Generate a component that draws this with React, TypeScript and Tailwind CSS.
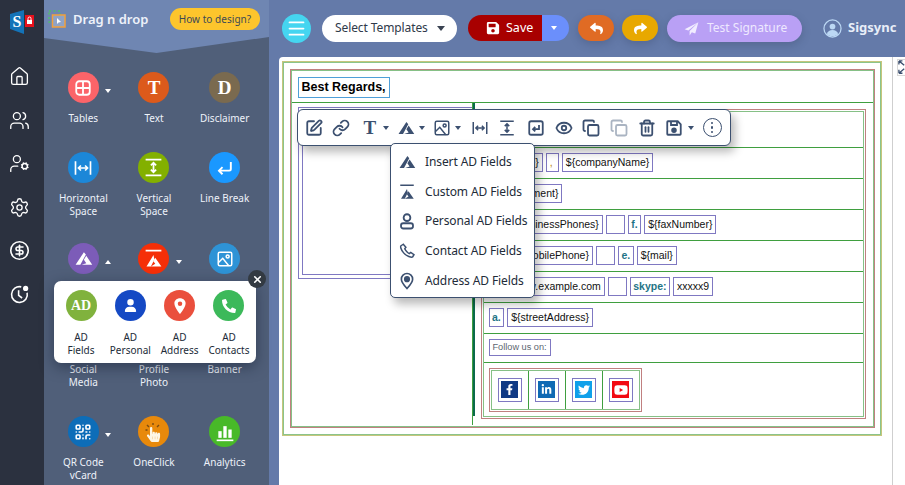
import type { ReactNode } from "react";
import {
  CircleDollarSign,
  Copy,
  Eye,
  Home,
  Link,
  Menu,
  QrCode,
  Settings,
  SquarePen,
  Trash2,
  UserCog,
  Users,
  X,
} from "lucide-react";
import {
  FaFacebookF,
  FaHandPointer,
  FaLinkedinIn,
  FaPhoneAlt,
  FaReply,
  FaSave,
  FaShare,
  FaTwitter,
  FaYoutube,
} from "react-icons/fa";
import { IoLocationSharp } from "react-icons/io5";
import { FaUser } from "react-icons/fa6";

const ui = "font-['Noto_Sans',sans-serif]";

function AdGlyph({ className = "", bar = false }: { className?: string; bar?: boolean }) {
  return (
    <svg viewBox="0 0 24 24" className={className} fill="currentColor">
      {bar ? (
        <>
          <rect x="3" y="2" width="18" height="2" />
          <path d="M12 8 4 21h5l4-8zM14 11l7 10H9l5-3-2.2-3z" />
        </>
      ) : (
        <path d="M12.5 4 2 20h6l7-13zM15.5 8.5 23 20H9.5l6-2-3-4.5z" />
      )}
    </svg>
  );
}

function HSpace({ className = "" }: { className?: string }) {
  return (
    <svg viewBox="0 0 24 24" className={className} fill="none" stroke="currentColor" strokeWidth="2">
      <path d="M3 4v16M21 4v16M6.5 12h11M9.5 9l-3 3 3 3M14.5 9l3 3-3 3" />
    </svg>
  );
}

function VSpace({ className = "" }: { className?: string }) {
  return (
    <svg viewBox="0 0 24 24" className={className} fill="none" stroke="currentColor" strokeWidth="2">
      <path d="M3 3h18M3 21h18M12 6.5v11M9 9.5l3-3 3 3M9 14.5l3 3 3-3" />
    </svg>
  );
}

function TableGlyph() {
  return (
    <svg viewBox="0 0 24 24" className="h-[18px] w-[18px]" fill="none" stroke="white" strokeWidth="2.4">
      <rect x="3" y="3" width="18" height="18" rx="4" />
      <path d="M12 3v18M3 12h18" />
    </svg>
  );
}

function ImageGlyph({ className = "" }: { className?: string }) {
  return (
    <svg viewBox="0 0 24 24" className={className} fill="none" stroke="currentColor" strokeWidth="2">
      <rect x="3" y="3" width="18" height="18" rx="2" />
      <circle cx="15.5" cy="8.5" r="2" />
      <path d="m3 17 6-6 8 10" />
    </svg>
  );
}

function BreakGlyph() {
  return (
    <svg viewBox="0 0 24 24" className="h-[19px] w-[19px]" fill="none" stroke="white" strokeWidth="2.4">
      <path d="M20 5v9a2 2 0 0 1-2 2H5M9.5 11.5 5 16l4.5 4.5" />
    </svg>
  );
}

function AnalyticsGlyph() {
  return (
    <svg viewBox="0 0 24 24" className="h-[20px] w-[20px]" fill="white">
      <rect x="4" y="11" width="4" height="8" />
      <rect x="10" y="5" width="4" height="14" />
      <rect x="16" y="9" width="4" height="10" />
      <rect x="2" y="21" width="20" height="2" />
    </svg>
  );
}

function ClickGlyph() {
  return (
    <span className="relative flex h-[20px] w-[20px] items-end justify-center">
      <FaHandPointer className="h-[15px] w-[15px] text-[#fdf6e6]" />
      <svg viewBox="0 0 20 20" className="absolute inset-0" fill="none" stroke="#7a4a12" strokeWidth="1.4">
        <path d="M5 5 3 3M9 3V1M13 5l2-2M3.500 8H1.500" />
      </svg>
    </span>
  );
}

function Caret({ up = false, className = "" }: { up?: boolean; className?: string }) {
  return (
    <span
      className={`h-0 w-0 border-x-[3.5px] border-x-transparent ${
        up ? "border-b-[4px] border-b-white" : "border-t-[4px] border-t-white"
      } ${className}`}
    />
  );
}

type PanelItem = { label: string[]; bg: string; icon: ReactNode; caret?: "up" | "down" };

const serif = "font-['Liberation_Serif',serif] text-[19px] font-bold leading-none text-white";

const panelItems: PanelItem[] = [
  { label: ["Tables"], bg: "bg-[#fb6469]", icon: <TableGlyph />, caret: "down" },
  { label: ["Text"], bg: "bg-[#dc5a1b]", icon: <span className={serif}>T</span> },
  { label: ["Disclaimer"], bg: "bg-[#7a6a4f]", icon: <span className={serif}>D</span> },
  { label: ["Horizontal", "Space"], bg: "bg-[#1c87d8]", icon: <HSpace className="h-[20px] w-[20px] text-white" /> },
  { label: ["Vertical", "Space"], bg: "bg-[#83b000]", icon: <VSpace className="h-[21px] w-[21px] text-white" /> },
  { label: ["Line Break"], bg: "bg-[#1a98ff]", icon: <BreakGlyph /> },
  { label: ["AD Fields"], bg: "bg-[#7c5cb8]", icon: <AdGlyph className="h-[19px] w-[19px] text-white" />, caret: "up" },
  { label: ["Custom AD"], bg: "bg-[#f52f08]", icon: <AdGlyph bar className="h-[21px] w-[21px] text-white" />, caret: "down" },
  { label: ["Image"], bg: "bg-[#2e93d6]", icon: <ImageGlyph className="h-[18px] w-[18px] text-white" /> },
  { label: ["Social", "Media"], bg: "bg-[#3a86c8]", icon: null },
  { label: ["Profile", "Photo"], bg: "bg-[#3a86c8]", icon: null },
  { label: ["Banner"], bg: "bg-[#3a86c8]", icon: null },
  { label: ["QR Code", "vCard"], bg: "bg-[#0d6db8]", icon: <QrCode className="h-[18px] w-[18px] text-white" strokeWidth={2.2} />, caret: "down" },
  { label: ["OneClick"], bg: "bg-[#e8890b]", icon: <ClickGlyph /> },
  { label: ["Analytics"], bg: "bg-[#48b928]", icon: <AnalyticsGlyph /> },
];

const popItems = [
  { label: ["AD", "Fields"], bg: "bg-[#80b23d]", icon: <span className="font-['Liberation_Serif',serif] text-[14px] font-bold text-white">AD</span> },
  { label: ["AD", "Personal"], bg: "bg-[#1549c4]", icon: <FaUser className="h-[13px] w-[13px] text-white" /> },
  { label: ["AD", "Address"], bg: "bg-[#ea4f3d]", icon: <IoLocationSharp className="h-[18px] w-[18px] text-white" /> },
  { label: ["AD", "Contacts"], bg: "bg-[#3cb95a]", icon: <FaPhoneAlt className="h-[14px] w-[14px] text-white" /> },
];

function Sidebar() {
  return (
    <aside className="flex h-full w-[44px] shrink-0 flex-col items-center bg-[#2b313f] pr-[5px] text-white">
      <svg viewBox="0 0 25 24" className="ml-[5px] mt-[10px] h-[24px] w-[25px] shrink-0">
        <polygon points="0,4 14,0 14,24 0,19" fill="#1473b8" />
        <text x="2.5" y="17" fontFamily="Liberation Serif" fontWeight="700" fontSize="16" fill="white">S</text>
        <rect x="15" y="5" width="9" height="12" fill="#e8101c" />
        <rect x="17" y="10" width="5" height="4" fill="white" />
        <path d="M18 10V8.5a1.500 1.500 0 0 1 3 0V10" fill="none" stroke="white" />
      </svg>
      <div className="mt-[32px] flex flex-col items-center gap-[22.5px]">
        <Home className="h-[21px] w-[21px]" strokeWidth={1.5} />
        <Users className="h-[21px] w-[21px]" strokeWidth={1.5} />
        <UserCog className="h-[21px] w-[21px]" strokeWidth={1.5} />
        <Settings className="h-[21px] w-[21px]" strokeWidth={1.5} />
        <CircleDollarSign className="h-[21px] w-[21px]" strokeWidth={1.8} />
        <svg viewBox="0 0 24 24" className="h-[21px] w-[21px]" fill="none" stroke="white" strokeWidth="1.8">
          <path d="M14 3.300A9 9 0 1 0 20.700 10M11 7v6l4 3" />
          <circle cx="19" cy="5" r="3" fill="white" stroke="none" />
        </svg>
      </div>
    </aside>
  );
}

function Panel() {
  return (
    <section className={`relative h-full w-[225px] shrink-0 bg-[#505f79] text-white ${ui}`}>
      <header className="flex h-[53px] items-start bg-[#6f86b2] pl-[4px] pr-[9px] pt-[8px] [clip-path:polygon(0_0,100%_0,100%_37px,50%_53px,0_38px)]">
        <svg viewBox="0 0 18 18" className="mt-[2px] h-[18px] w-[18px]" fill="none">
          <rect x="1" y="1" width="11" height="11" stroke="#52c06a" strokeWidth="1.5" strokeDasharray="2 2.5" />
          <rect x="4.5" y="5" width="12.5" height="12" fill="#8fa3c7" stroke="#f2a03d" strokeWidth="1.5" />
          <path d="M9 8v6l1.500-1.500 2.500-.5z" fill="white" />
        </svg>
        <span className="ml-[7px] mt-[1px] text-[13px] font-semibold leading-[20px] text-[#eef2fa]">Drag n drop</span>
        <span className="ml-auto flex h-[22px] w-[90px] items-center justify-center rounded-full bg-[#fdc52c] text-[10px] tracking-[0.05px] text-[#3d4a55]">
          How to design?
        </span>
      </header>
      <div className="ml-[4px] mt-[19px] grid w-[212px] grid-cols-3 grid-rows-[80px_91px_80px_93px_80px] text-[#eef2fa]">
        {panelItems.map((item) => (
          <div key={item.label.join(" ")} className="relative flex flex-col items-center">
            <span className={`flex h-[31px] w-[31px] items-center justify-center rounded-full ${item.bg}`}>{item.icon}</span>
            {item.caret ? <Caret up={item.caret === "up"} className="absolute left-[57px] top-[17px]" /> : null}
            <span className="mt-[9px] text-center text-[10px] leading-[13px]">
              {item.label.map((line) => (
                <span key={line} className="block">
                  {line}
                </span>
              ))}
            </span>
          </div>
        ))}
      </div>
      <div className="absolute left-[10px] top-[281px] flex h-[82px] w-[202px] justify-between rounded-[7px] bg-white px-[6px] pt-[9px] shadow-[0_4px_14px_rgba(20,30,50,0.5)]">
        {popItems.map((item) => (
          <div key={item.label[1]} className="flex w-[42px] flex-col items-center">
            <span className={`flex h-[31px] w-[31px] items-center justify-center rounded-full ${item.bg}`}>{item.icon}</span>
            <span className="mt-[10px] whitespace-nowrap text-center text-[10px] leading-[13px] text-[#222b38]">
              {item.label.map((line) => (
                <span key={line} className="block">
                  {line}
                </span>
              ))}
            </span>
          </div>
        ))}
      </div>
      <span className="absolute left-[204px] top-[270px] flex h-[18px] w-[18px] items-center justify-center rounded-full bg-[#333a42]">
        <X className="h-[11px] w-[11px] text-white" strokeWidth={3.5} />
      </span>
    </section>
  );
}

function TopBar() {
  return (
    <div className={`flex h-[57px] shrink-0 items-center bg-[#647aa9] pb-[1px] pl-[13px] ${ui}`}>
      <span className="flex h-[29px] w-[29px] items-center justify-center rounded-full bg-[#45d5f0]">
        <Menu className="h-[21px] w-[21px] text-white" strokeWidth={2} />
      </span>
      <span className="ml-[11px] flex h-[27px] w-[135px] items-center rounded-full bg-white pl-[13px] text-[12px] tracking-[-0.1px] text-[#2f3a4a]">
        Select Templates
        <span className="ml-[9px] h-0 w-0 border-x-[4.5px] border-t-[5px] border-x-transparent border-t-[#3a4352]" />
      </span>
      <span className="ml-[11px] flex h-[26px] w-[74px] items-center rounded-l-full bg-[#a80000] pl-[18px] text-[12.5px] text-white">
        <FaSave className="h-[14px] w-[14px]" />
        <span className="ml-[6px]">Save</span>
      </span>
      <span className="flex h-[26px] w-[27px] items-center justify-center rounded-r-full bg-[#6b8ffb] pr-[4px]">
        <Caret />
      </span>
      <span className="ml-[9px] flex h-[26px] w-[36px] items-center justify-center rounded-full bg-[#e06b24] text-white shadow-[0_3px_8px_rgba(40,50,80,0.25)]">
        <FaReply className="h-[13px] w-[13px]" />
      </span>
      <span className="ml-[8px] flex h-[26px] w-[36px] items-center justify-center rounded-full bg-[#e8a800] text-white shadow-[0_3px_8px_rgba(40,50,80,0.25)]">
        <FaShare className="h-[13px] w-[13px]" />
      </span>
      <span className="ml-[9px] flex h-[27px] w-[135px] items-center rounded-full bg-[#b9a0f5] pl-[17px] text-[12px] text-[#eee8ff] shadow-[0_3px_8px_rgba(40,50,80,0.25)]">
        <svg viewBox="0 0 24 24" className="h-[15px] w-[15px]" fill="#f1ecff">
          <path d="M23 2 1 13l6 2zM23 2 9 16v7l3.500-5 5.500 2z" />
        </svg>
        <span className="ml-[8px]">Test Signature</span>
      </span>
      <svg viewBox="0 0 20 20" className="ml-[21px] h-[19px] w-[19px]" fill="none">
        <circle cx="10" cy="10" r="9" stroke="#bcd8f4" strokeWidth="1.3" />
        <circle cx="10" cy="8" r="3" fill="#bcd8f4" />
        <path d="M4 16c1-3.500 3-4.500 6-4.500s5 1 6 4.500c-3.500 3-8.500 3-12 0z" fill="#bcd8f4" />
      </svg>
      <span className="ml-[6px] text-[13px] font-bold text-[#e8eef8]">Sigsync</span>
    </div>
  );
}

function Box({ children, className = "h-[19px] px-[3px] text-[10.5px] text-[#111]" }: { children?: ReactNode; className?: string }) {
  return <span className={`flex items-center whitespace-nowrap border border-[#7f78c2] ${className}`}>{children}</span>;
}

function Label({ children }: { children: ReactNode }) {
  return <Box className="h-[19px] px-[2.5px] text-[10.5px] font-bold text-[#1f7485]">{children}</Box>;
}

function Row({ children, className = "h-[31px]" }: { children: ReactNode; className?: string }) {
  return <div className={`flex items-center gap-[3px] border-b border-[#3f9f3f] pl-[5px] ${className}`}>{children}</div>;
}

const socials = [
  { bg: "bg-[#103a84]", icon: <FaFacebookF className="h-[11px] w-[11px] text-white" /> },
  { bg: "bg-[#0f69b4]", icon: <FaLinkedinIn className="h-[11px] w-[11px] text-white" /> },
  { bg: "bg-[#10a0ea]", icon: <FaTwitter className="h-[12px] w-[12px] text-white" /> },
  { bg: "bg-[#f20a12]", icon: <FaYoutube className="h-[14px] w-[14px] text-white" /> },
];

function Signature() {
  return (
    <div className="ml-[3px] mt-[4px] h-[375px] w-[600px] border border-[#c6c67c] font-['Liberation_Sans',sans-serif]">
      <div className="h-full border-[1.5px] border-[#8bc48b] p-[5.5px]">
        <div className="h-[359px] border border-[#c08080]">
          <div className="h-full border border-[#86c086]">
            <div className="flex h-[32px] items-center border-b border-[#3f9f3f] pl-[6px] pt-[3px]">
              <span className="flex h-[21px] w-[92px] items-center whitespace-nowrap border border-[#4f9fd8] px-[3px] text-[12.5px] font-bold leading-none text-black">
                Best Regards,
              </span>
            </div>
            <div className="flex h-[322px]">
              <div className="h-full w-[181px] shrink-0 border-r border-[#3f9f3f] pl-[6px] pt-[4px]">
                <div className="h-[172px] border border-r-0 border-[#7f78c2] pb-[3px] pl-[3px] pt-[3px]">
                  <div className="h-full border border-r-0 border-[#7f78c2]" />
                </div>
              </div>
              <div className="h-[313px] w-[2px] shrink-0 bg-[#0b6b4c]" />
              <div className="ml-[6px] mt-[6px] h-[310px] w-[385px] border border-[#c08080] p-[1px]">
                <div className="h-full border border-[#86c086]">
                  <Row className="h-[36px]">
                    <Box>{"${displayName}"}</Box>
                  </Row>
                  <Row>
                    <Box>{"${jobTitle}"}</Box>
                    <Box className="h-[19px] w-[13px] px-[3px] text-[10.5px] text-[#b8860b]">,</Box>
                    <Box>{"${companyName}"}</Box>
                  </Row>
                  <Row>
                    <Box>{"${department}"}</Box>
                  </Row>
                  <Row>
                    <Label>t.</Label>
                    <Box>{"${businessPhones}"}</Box>
                    <Box className="h-[19px] w-[19px]" />
                    <Label>f.</Label>
                    <Box>{"${faxNumber}"}</Box>
                  </Row>
                  <Row>
                    <Label>m.</Label>
                    <Box>{"${mobilePhone}"}</Box>
                    <Box className="h-[19px] w-[19px]" />
                    <Label>e.</Label>
                    <Box>{"${mail}"}</Box>
                  </Row>
                  <Row>
                    <Label>w.</Label>
                    <Box>www.example.com</Box>
                    <Box className="h-[19px] w-[19px]" />
                    <Label>skype:</Label>
                    <Box>xxxxx9</Box>
                  </Row>
                  <Row>
                    <Label>a.</Label>
                    <Box>{"${streetAddress}"}</Box>
                  </Row>
                  <Row className="h-[29px]">
                    <Box className="h-[17px] px-[3px] text-[9.2px] text-[#5c6670]">Follow us on:</Box>
                  </Row>
                  <div className="flex h-[54px] items-center pl-[5px]">
                    <div className="border border-[#c08080] p-[1px]">
                      <div className="flex h-[40px] border border-[#86c086]">
                        {socials.map((social, index) => (
                          <div key={index} className="flex w-[37px] items-center justify-center border-r border-[#3f9f3f] last:w-[36px] last:border-r-0">
                            <span className="flex h-[24px] w-[24px] items-center justify-center border border-[#7f78c2]">
                              <span className={`flex h-[17px] w-[17px] items-center justify-center ${social.bg}`}>{social.icon}</span>
                            </span>
                          </div>
                        ))}
                      </div>
                    </div>
                  </div>
                </div>
              </div>
            </div>
          </div>
        </div>
      </div>
    </div>
  );
}

function ToolCaret({ className = "" }: { className?: string }) {
  return <span className={`h-0 w-0 border-x-[3.5px] border-t-[4px] border-x-transparent border-t-[#3c5070] ${className}`} />;
}

function Toolbar() {
  return (
    <div className="absolute left-[18px] top-[52px] flex h-[37px] w-[434px] items-center rounded-[6px] border border-[#3c5070] bg-white pl-[7px] text-[#3c5070] shadow-[4px_6px_10px_rgba(0,0,0,0.28)]">
      <SquarePen className="h-[18px] w-[18px] shrink-0" strokeWidth={2.4} />
      <Link className="ml-[9px] h-[18px] w-[18px] shrink-0" strokeWidth={2.4} />
      <span className="ml-[13.5px] font-['Liberation_Serif',serif] text-[19px] font-bold leading-none">T</span>
      <ToolCaret className="ml-[7px]" />
      <AdGlyph className="ml-[8px] h-[18px] w-[18px] shrink-0" />
      <ToolCaret className="ml-[3.5px]" />
      <ImageGlyph className="ml-[8.5px] h-[18px] w-[18px] shrink-0" />
      <ToolCaret className="ml-[4px]" />
      <HSpace className="ml-[10px] h-[18px] w-[18px] shrink-0" />
      <VSpace className="ml-[9px] h-[18px] w-[18px] shrink-0" />
      <svg viewBox="0 0 24 24" className="ml-[11px] h-[18px] w-[18px] shrink-0" fill="none" stroke="currentColor" strokeWidth="2.4">
        <rect x="3" y="3" width="18" height="18" rx="2.5" />
        <path d="M16 8v5.500H8M11 10.500l-3 3 3 3" />
      </svg>
      <Eye className="ml-[10px] h-[18px] w-[18px] shrink-0" strokeWidth={2.4} />
      <Copy className="ml-[9px] h-[18px] w-[18px] shrink-0" strokeWidth={2.4} />
      <Copy className="ml-[10px] h-[18px] w-[18px] shrink-0 text-[#aab4c2]" strokeWidth={2.4} />
      <Trash2 className="ml-[10px] h-[18px] w-[18px] shrink-0" strokeWidth={2.4} />
      <svg viewBox="0 0 24 24" className="ml-[9px] h-[18px] w-[18px] shrink-0" fill="none" stroke="currentColor" strokeWidth="2.4">
        <path d="M4 3h13l4 4v13a1 1 0 0 1-1 1H4a1 1 0 0 1-1-1V4a1 1 0 0 1 1-1z" />
        <path d="M8 3v5h8V3" />
        <circle cx="12" cy="15" r="2.5" fill="currentColor" />
      </svg>
      <ToolCaret className="ml-[4.5px]" />
      <span className="ml-[9px] flex h-[19px] w-[19px] shrink-0 items-center justify-center rounded-full border border-[#3c5070]">
        <span className="flex flex-col gap-[2px]">
          <span className="h-[2.5px] w-[2.5px] rounded-full bg-[#3c5070]" />
          <span className="h-[2.5px] w-[2.5px] rounded-full bg-[#3c5070]" />
          <span className="h-[2.5px] w-[2.5px] rounded-full bg-[#3c5070]" />
        </span>
      </span>
    </div>
  );
}

const menuItems = [
  { label: "Insert AD Fields", icon: <AdGlyph className="h-[18px] w-[18px]" /> },
  { label: "Custom AD Fields", icon: <AdGlyph bar className="h-[18px] w-[18px]" /> },
  {
    label: "Personal AD Fields",
    icon: (
      <svg viewBox="0 0 24 24" className="h-[18px] w-[18px]" fill="none" stroke="currentColor" strokeWidth="2.4">
        <circle cx="12" cy="7.5" r="4.5" />
        <rect x="4" y="15" width="16" height="7" rx="3" />
      </svg>
    ),
  },
  {
    label: "Contact AD Fields",
    icon: (
      <svg viewBox="0 0 24 24" className="h-[18px] w-[18px]" fill="none" stroke="currentColor" strokeWidth="2">
        <path d="M7 3 4 5c-1 1-.5 5 3.500 9.500S18 21 19.500 20l1.800-3-4.300-3-2 1.500c-1.500-.5-5-4-6-6.500L10.500 7z" />
      </svg>
    ),
  },
  {
    label: "Address AD Fields",
    icon: (
      <svg viewBox="0 0 24 24" className="h-[18px] w-[18px]" fill="none" stroke="currentColor" strokeWidth="2.2">
        <path d="M12 22C7 16.500 4.500 13 4.500 9.500a7.500 7.500 0 0 1 15 0C19.500 13 17 16.500 12 22z" />
        <circle cx="12" cy="9.5" r="3" fill="currentColor" />
      </svg>
    ),
  },
];

function AdMenu() {
  return (
    <div className={`absolute left-[111px] top-[86px] flex h-[155px] w-[145px] flex-col rounded-[5px] border border-[#3c5070] bg-white pl-[7px] pt-[3px] shadow-[4px_6px_10px_rgba(0,0,0,0.28)] ${ui}`}>
      {menuItems.map((item) => (
        <div key={item.label} className="flex h-[29.7px] items-center text-[#3c5070]">
          <span className="flex w-[18px] justify-center">{item.icon}</span>
          <span className="ml-[9px] whitespace-nowrap text-[12px] tracking-[-0.1px] text-[#222b38]">{item.label}</span>
        </div>
      ))}
    </div>
  );
}

export default function App() {
  return (
    <div className="flex h-[485px] w-[905px] overflow-hidden bg-white">
      <Sidebar />
      <Panel />
      <main className="flex h-full min-w-0 flex-1 flex-col">
        <TopBar />
        <div className="flex min-h-0 flex-1 bg-[#647aa9]">
          <div className="relative ml-[10px] w-[613px] shrink-0 rounded-tl-[4px] bg-white">
            <Signature />
            <Toolbar />
            <AdMenu />
          </div>
          <div className="flex-1 border-l border-[#cfcfcf] bg-white pl-[4px] pt-[2px]">
            <svg viewBox="0 0 9 17" className="h-[17px] w-[9px] border-y border-l border-[#d8d8d8]" fill="none" stroke="#3c5070" strokeWidth="1.5">
              <path d="M1 1h4M1 1v4M1 1l6 5M1 15h4M1 15v-4M1 15l6-5" />
            </svg>
          </div>
        </div>
      </main>
    </div>
  );
}
